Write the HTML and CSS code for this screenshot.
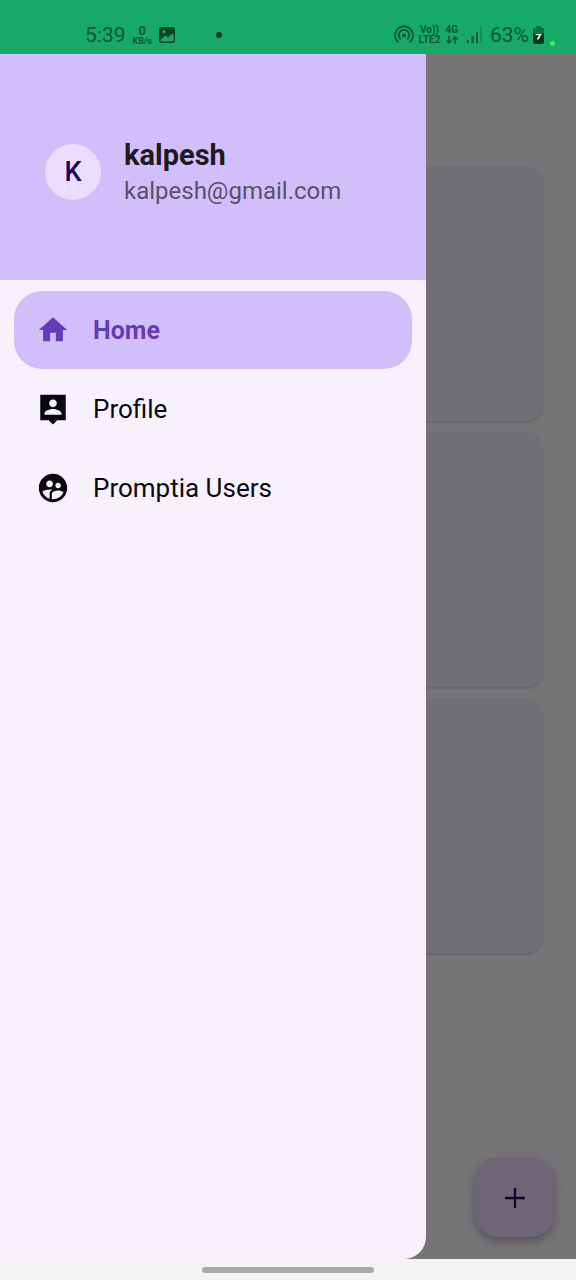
FILE: index.html
```html
<!DOCTYPE html>
<html lang="en">
<head>
<meta charset="utf-8">
<meta name="viewport" content="width=device-width, initial-scale=1">
<title>Promptia</title>
<link rel="stylesheet" href="styles.css">
</head>
<body>
<header class="status">
  <div class="status-group">
    <span class="status-text">5:39</span>
    <span class="stack"><b class="speed">0</b><b class="unit">KB/s</b></span>
    <svg class="icon-picture" viewBox="0 0 16 16" aria-hidden="true"><rect x=".7" y=".7" width="14.6" height="14.6" rx="2" fill="none" stroke="currentColor" stroke-width="1.4"/><path fill="currentColor" fill-rule="evenodd" d="M2 0h12a2 2 0 0 1 2 2v7l-3-2.500-4 4-3-2-4 4H0V2a2 2 0 0 1 2-2zm3 3a1.700 1.700 0 1 0 0 3.400A1.700 1.700 0 0 0 5 3z"/></svg>
    <span class="camera"></span>
  </div>
  <div class="status-group status-right">
    <svg class="icon-hotspot" viewBox="0 0 20 20" fill="none" stroke="currentColor" stroke-width="1.8" aria-hidden="true"><path d="M4.500 17.500a9 9 0 1 1 11 0M6.700 14.300a5.300 5.300 0 1 1 6.600 0"/><circle cx="10" cy="10.500" r="2" fill="currentColor" stroke="none"/></svg>
    <span class="stack"><b class="net">Vo))</b><b class="net">LTE2</b></span>
    <span class="stack"><b class="net">4G</b><svg class="icon-arrows" viewBox="0 0 12 8" fill="none" stroke="currentColor" stroke-width="1.500" aria-hidden="true"><path d="M3 0v7M.5 4.500 3 7l2.500-2.500M9 8V1M6.500 3.500 9 1l2.500 2.500"/></svg></span>
    <svg class="icon-signal" viewBox="0 0 15 16" fill="none" stroke="currentColor" stroke-width="2" aria-hidden="true"><path d="M1 13v3M5.500 9v7M10 5v11"/><path d="M14 0v16" stroke-width="1" opacity=".6"/></svg>
    <span class="status-text">63%</span>
    <svg class="icon-battery" viewBox="0 0 11 18" aria-hidden="true"><path fill="#0b713f" d="M3 0h5v2h3v6H0V2h3z"/><path fill="#06371f" d="M0 7h11v9a2 2 0 0 1-2 2H2a2 2 0 0 1-2-2z"/><path fill="none" stroke="#d9eee2" stroke-width="1.700" d="M2.500 8.500h5l-3 5"/></svg>
    <span class="privacy-dot"></span>
  </div>
</header>

<main class="screen">
  <section class="feed">
    <article class="card"></article>
    <article class="card"></article>
    <article class="card"></article>
  </section>
  <button class="fab" type="button" aria-label="Add"><svg viewBox="0 0 24 24" fill="currentColor" aria-hidden="true"><path d="M19 12.800h-6.200V19h-1.600v-6.200H5v-1.600h6.200V5h1.600v6.200H19z"/></svg></button>

  <aside class="drawer">
    <div class="account">
      <span class="avatar">K</span>
      <div class="identity">
        <strong class="name">kalpesh</strong>
        <span class="email">kalpesh@gmail.com</span>
      </div>
    </div>
    <nav class="menu">
      <a class="item active" href="#home"><svg class="item-icon" viewBox="0 0 24 24" fill="currentColor" aria-hidden="true"><path d="M10 20v-6h4v6h5v-8h3L12 3 2 12h3v8z"/></svg>Home</a>
      <a class="item" href="#profile"><svg class="item-icon" viewBox="0 0 24 24" fill="currentColor" aria-hidden="true"><path d="M21 2H3v18h6l3 3 3-3h6V2zm-9 3.300c1.490 0 2.700 1.210 2.700 2.700s-1.210 2.700-2.700 2.700S9.300 9.490 9.300 8s1.210-2.700 2.700-2.700zM18 16H6v-.9c0-2 4-3.100 6-3.100s6 1.100 6 3.100v.9z"/></svg>Profile</a>
      <a class="item" href="#users"><svg class="item-icon" viewBox="0 0 24 24" fill="currentColor" aria-hidden="true"><path d="M11.990 2c-5.520 0-10 4.480-10 10s4.480 10 10 10 10-4.480 10-10-4.480-10-10-10zm3.610 6.340c1.070 0 1.930.86 1.930 1.930 0 1.070-.86 1.930-1.930 1.930-1.070 0-1.930-.86-1.930-1.930-.01-1.070.86-1.930 1.930-1.930zm-6-1.580c1.300 0 2.360 1.060 2.360 2.360 0 1.300-1.060 2.360-2.360 2.360s-2.360-1.060-2.360-2.360c0-1.310 1.050-2.360 2.360-2.360zm0 9.130v3.750c-2.400-.75-4.300-2.600-5.140-4.960 1.050-1.120 3.670-1.690 5.140-1.690.53 0 1.200.08 1.900.22-1.640.87-1.900 2.020-1.900 2.680zM11.990 20c-.27 0-.53-.01-.79-.04v-4.070c0-1.420 2.940-2.130 4.400-2.130 1.070 0 2.920.39 3.840 1.150-1.170 2.970-4.060 5.090-7.450 5.090z"/></svg>Promptia Users</a>
    </nav>
  </aside>
</main>

<footer class="gesture"><span class="handle"></span></footer>
</body>
</html>
```

FILE: styles.css
```css
* {
  box-sizing: border-box;
}

body {
  display: flex;
  flex-direction: column;
  min-height: 100vh;
  margin: 0;
  background: #f4f4f4;
  font-family: Roboto, "Liberation Sans", sans-serif;
}

/* System status bar */
.status {
  display: flex;
  justify-content: space-between;
  height: 54px;
  padding: 16px 21px 0 85px;
  background: #16a967;
  color: #075a32;
}

.status-group {
  display: flex;
  align-items: center;
  gap: 7px;
  height: 38px;
}

.status-right {
  gap: 5px;
}

.status-text {
  font-size: 21px;
  line-height: 24px;
}

.stack {
  display: flex;
  flex-direction: column;
  align-items: center;
}

.speed {
  font-size: 13px;
  line-height: 13px;
}

.unit {
  font-size: 9px;
  line-height: 9px;
}

.net {
  font-size: 10px;
  line-height: 10px;
}

.icon-picture {
  width: 16px;
  height: 16px;
  color: #064526;
}

.camera {
  width: 6px;
  height: 6px;
  margin-left: 34px;
  border-radius: 50%;
  background: #053b20;
}

.icon-hotspot {
  width: 20px;
  height: 20px;
}

.icon-arrows {
  width: 12px;
  height: 8px;
  margin: 1px 0;
}

.icon-signal {
  width: 15px;
  height: 16px;
  margin: 0 3px 0 4px;
}

.icon-battery {
  width: 11px;
  height: 18px;
}

.status-text + .icon-battery {
  margin-left: -1px;
}

.privacy-dot {
  width: 5px;
  height: 5px;
  margin: 16px 0 0 1px;
  border-radius: 50%;
  background: #3df24d;
}

/* Dimmed page under the drawer */
.screen {
  position: relative;
  display: flex;
  flex: 1;
  flex-direction: column;
  justify-content: space-between;
  background: #767476;
}

.feed {
  display: flex;
  flex-direction: column;
  gap: 11px;
  padding: 112px 33px 0;
}

.card {
  height: 255px;
  border-radius: 17px;
  background: #716f74;
  box-shadow: 0 2px 2px #68666a;
}

.fab {
  display: grid;
  place-items: center;
  align-self: flex-end;
  width: 79px;
  height: 79px;
  margin: 0 22px 22px;
  padding: 0;
  border: 0;
  border-radius: 23px;
  background: #6d6677;
  color: #160332;
  box-shadow: 0 4px 8px #565456;
}

.fab svg {
  width: 34px;
  height: 34px;
}

/* Navigation drawer */
.drawer {
  position: absolute;
  top: 0;
  bottom: 0;
  left: 0;
  width: 74%;
  overflow: hidden;
  border-bottom-right-radius: 22px;
  background: #f6f1fb;
}

.account {
  display: flex;
  align-items: center;
  gap: 23px;
  height: 226px;
  padding: 10px 45px 0;
  border-bottom: 1px solid #cfc2e8;
  background: #d1bffb;
}

.avatar {
  display: grid;
  place-items: center;
  width: 56px;
  height: 56px;
  border-radius: 50%;
  background: #eaddff;
  color: #21005d;
  font-size: 27px;
  font-weight: 500;
}

.identity {
  display: flex;
  flex-direction: column;
  gap: 4px;
  padding-top: 3px;
}

.name {
  color: #1d1b20;
  font-size: 29px;
  line-height: 32px;
}

.email {
  color: #5a5069;
  font-size: 24px;
  line-height: 32px;
}

.menu {
  display: flex;
  flex-direction: column;
  gap: 1px;
  padding: 11px 14px;
}

.item {
  display: flex;
  align-items: center;
  gap: 23px;
  height: 78px;
  padding: 0 22px;
  border-radius: 28px;
  color: #0b0910;
  font-size: 26px;
  text-decoration: none;
}

.item.active {
  background: #d1bffb;
  color: #673ab7;
  font-size: 25px;
  font-weight: 700;
}

.item-icon {
  width: 34px;
  height: 34px;
}

/* System gesture bar */
.gesture {
  display: grid;
  place-items: center;
  height: 21px;
}

.handle {
  width: 30%;
  height: 6px;
  border-radius: 3px;
  background: #aaa;
}
```
